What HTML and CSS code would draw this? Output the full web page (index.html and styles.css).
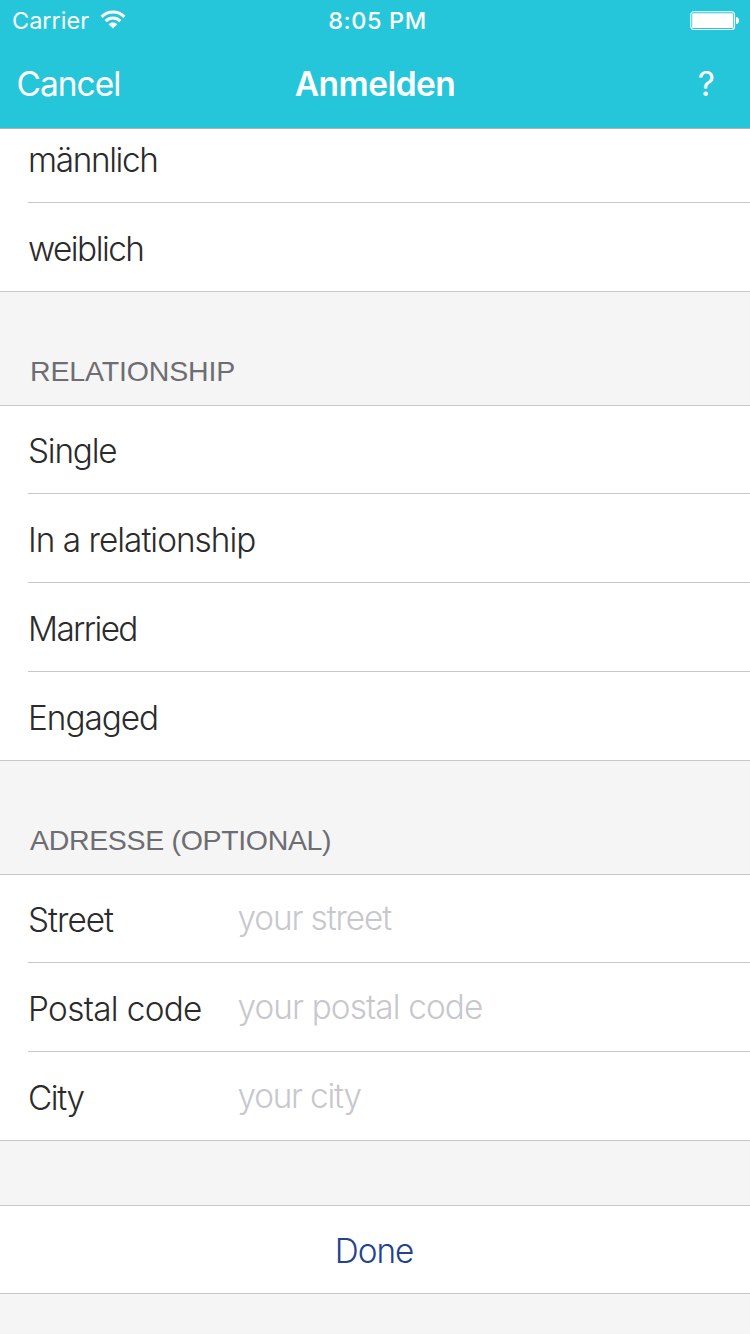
FILE: index.html
```html
<!DOCTYPE html>
<html lang="de">
<head>
<meta charset="utf-8">
<title>Anmelden</title>
<link rel="stylesheet" href="styles.css">
</head>
<body>
<header class="header">
  <div class="status">
    <div class="carrier"><span class="carrier-name">Carrier</span>
      <svg class="wifi" width="26" height="20" viewBox="0 0 26 20"><g fill="none" stroke="#fff" stroke-width="3"><path d="M1.6 6.9C8 .5 18 .5 24.4 6.9"/><path d="M5.6 11.1C9.8 7.1 16.2 7.1 20.4 11.1"/></g><path fill="#fff" d="M8.6 14.2C11.1 11.9 14.9 11.9 17.4 14.2L13 18.6Z"/></svg>
    </div>
    <span class="time">8:05 PM</span>
    <svg class="battery" width="50" height="20" viewBox="0 0 50 20"><rect x=".75" y=".75" width="43.8" height="17.8" rx="3" fill="none" stroke="#fff" stroke-width="1.1"/><rect x="2.2" y="2.2" width="41" height="14.9" rx="1.2" fill="#fff"/><path fill="#fff" d="M46 6C50 6 50 13 46 13Z"/></svg>
  </div>
  <nav class="nav">
    <span class="cancel">Cancel</span>
    <span class="title">Anmelden</span>
    <span class="help">?</span>
  </nav>
</header>
<main>
  <ul class="group group-first">
    <li class="row row-clipped"><span class="l-male">männlich</span></li>
    <li class="row"><span class="l-female">weiblich</span></li>
  </ul>
  <h2 class="heading h-relationship">RELATIONSHIP</h2>
  <ul class="group">
    <li class="row"><span class="l-single">Single</span></li>
    <li class="row"><span class="l-relation">In a relationship</span></li>
    <li class="row"><span class="l-married">Married</span></li>
    <li class="row"><span class="l-engaged">Engaged</span></li>
  </ul>
  <h2 class="heading h-address">ADRESSE (OPTIONAL)</h2>
  <ul class="group">
    <li class="row field"><span class="l-street">Street</span><span class="hint p-street">your street</span></li>
    <li class="row field"><span class="l-postal">Postal code</span><span class="hint p-postal">your postal code</span></li>
    <li class="row field"><span class="l-city">City</span><span class="hint p-city">your city</span></li>
  </ul>
  <div class="done"><span class="l-done">Done</span></div>
</main>
</body>
</html>
```
FILE: styles.css
```css
* { box-sizing: border-box; }
body { margin: 0; width: 750px; height: 1334px; overflow: hidden; background: #f5f5f5; color: #2b2b2b; font-family: Inter, "Liberation Sans", sans-serif; font-size: 33.3px; font-weight: 300; }
span { white-space: nowrap; }

.header { height: 129px; background: #26c6da; border-bottom: 1px solid #b2b2b2; color: #fff; }
.status { display: grid; grid-template-columns: 1fr auto 1fr; height: 41px; padding: 0 10px 0 12px; align-items: center; font-size: 23.5px; line-height: 41px; }
.carrier { display: flex; align-items: center; gap: 10.5px; }
.carrier-name { font-weight: 400; }
.wifi { margin-top: -1px; }
.time { margin-left: 3px; font-weight: 500; letter-spacing: .6px; }
.battery { justify-self: end; }
.nav { display: grid; grid-template-columns: 1fr auto 1fr; height: 88px; padding-bottom: 3px; align-items: center; font-size: 33.5px; }
.cancel { margin-left: 16.5px; font-weight: 400; letter-spacing: -1px; }
.title { font-weight: 600; letter-spacing: -.55px; }
.help { justify-self: end; margin-right: 35px; font-weight: 400; }

.group { margin: 0; padding: 0; list-style: none; background: #fff; border-top: 1px solid #c8c7cc; border-bottom: 1px solid #c8c7cc; }
.group-first { border-top: 0; }
.row { display: flex; align-items: center; height: 89px; margin-left: 28px; padding-top: 3px; border-bottom: 1px solid #c8c7cc; }
.row:first-child { height: 88px; padding-top: 2px; }
.row:last-child { height: 88px; border-bottom: 0; }
.group .row-clipped:first-child { height: 74px; padding: 0 0 11px; }
.field { display: grid; grid-template-columns: 209.5px 1fr; }
.hint { color: #c7c7cd; padding-bottom: 4px; }
.heading { margin: 0; height: 113px; padding: 62px 0 0 30px; color: #6d6d72; font-family: "Liberation Sans", Arial, sans-serif; font-size: 28.5px; font-weight: 400; line-height: 34px; }
.done { display: flex; justify-content: center; align-items: center; margin-top: 64px; height: 89px; padding: 2px 2px 0 0; background: #fff; border-top: 1px solid #c8c7cc; border-bottom: 1px solid #c8c7cc; color: #1f438c; }

/* Tracking per label */
.l-male { letter-spacing: -1.35px; }
.l-female { letter-spacing: -1.5px; }
.l-single { letter-spacing: -1.2px; }
.l-relation { letter-spacing: -.97px; }
.l-married { letter-spacing: -1.6px; }
.l-engaged { letter-spacing: -1px; }
.l-street { letter-spacing: -1px; }
.l-postal { letter-spacing: -.65px; }
.l-city { letter-spacing: -1.4px; }
.p-street { letter-spacing: -1.1px; }
.p-postal { letter-spacing: -.87px; }
.p-city { letter-spacing: -1.2px; }
.l-done { letter-spacing: -1px; }
.h-relationship { letter-spacing: -.15px; }
.h-address { letter-spacing: -.33px; }
```
